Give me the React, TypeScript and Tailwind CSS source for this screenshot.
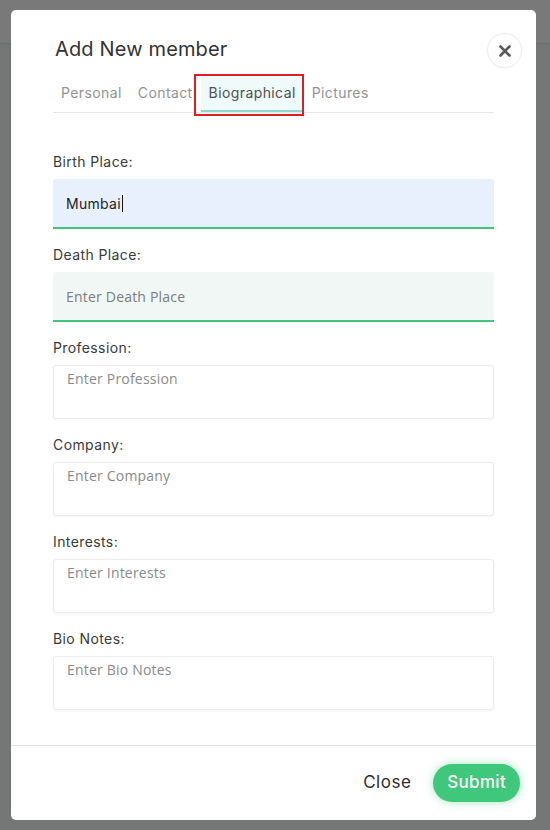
import React from 'react';

const poppins = { fontFamily: 'Inter, "Noto Sans", sans-serif' };
const openSans = { fontFamily: '"Open Sans", "Noto Sans", sans-serif' };

const tabs = ['Personal', 'Contact', 'Biographical', 'Pictures'];

const TextField: React.FC<{ label: string; placeholder: string }> = ({ label, placeholder }) => (
  <div className="mb-[16px]">
    <label className="block text-[14px] leading-[20px] tracking-[0.4px] text-[#3a3a3a] mb-[7px]" style={poppins}>
      {label}
    </label>
    <textarea
      rows={2}
      placeholder={placeholder}
      className="block w-full h-[54px] resize-none rounded-[3px] border border-[#ececec] bg-white pl-[13px] pr-3 pt-[3px] text-[14px] leading-[20px] tracking-[0.2px] text-[#333] placeholder:text-[#8a8a8a] shadow-[0_1px_3px_rgba(0,0,0,0.05)] outline-none"
      style={openSans}
    />
  </div>
);

export default function App() {
  return (
    <div className="w-[550px] h-[830px] overflow-hidden bg-[linear-gradient(to_bottom,#797979_0,#797979_43px,#6c6e6d_43px,#6c6e6d_44px,#747776_44px)] pt-[10px] pl-[11px]">
      <div className="w-[525px] h-[810px] bg-white rounded-[5px] flex flex-col">
        {/* header */}
        <div className="flex items-center justify-between pt-[23px] pl-[44px] pr-[14px]">
          <h2 className="text-[20px] leading-[28px] tracking-[0.15px] text-[#333] -mt-[3px]" style={poppins}>
            Add New member
          </h2>
          <button className="w-[35px] h-[35px] rounded-full border border-[#ededed] shadow-[0_0_3px_rgba(0,0,0,0.04)] flex items-center justify-center">
            <svg width="12" height="12" viewBox="0 0 12 12" fill="none">
              <path d="M1.5 1.5L10.5 10.5M10.5 1.5L1.5 10.5" stroke="#595959" strokeWidth="2.6" strokeLinecap="round" />
            </svg>
          </button>
        </div>

        <div className="px-[42px] mt-[6px]">
          <ul className="flex border-b border-[#e6e6e6]">
            {tabs.map((t) => {
              const active = t === 'Biographical';
              return (
                <li key={t} className="relative">
                  <span
                    className={`block px-2 pt-[9px] pb-[7px] text-[14px] leading-[20px] tracking-[0.4px] border-b-2 ${
                      active ? 'bg-[#effafa] border-[#8fd8d0] text-[#505050]' : 'border-transparent text-[#939393]'
                    }`}
                    style={poppins}
                  >
                    {t}
                  </span>
                  {active && (
                    <span className="absolute -left-[7px] right-0 top-0 -bottom-[4px] border-2 border-[#dc1f26]" />
                  )}
                </li>
              );
            })}
          </ul>
        </div>

        {/* body */}
        <div className="flex-1 px-[42px] pt-[39px]">
          <div className="mb-[16px]">
            <label className="block text-[14px] leading-[20px] tracking-[0.4px] text-[#3a3a3a] mb-[7px]" style={poppins}>
              Birth Place:
            </label>
            <div className="h-[50px] rounded-t-[3px] bg-[#e8f0fe] border-b-2 border-[#42c47d] pl-[13px] flex items-center">
              <span className="text-[14px] tracking-[0.3px] text-[#222]" style={poppins}>
                Mumbai
              </span>
              <span className="w-px h-[17px] bg-[#111] ml-[1px]" />
            </div>
          </div>

          <div className="mb-[16px]">
            <label className="block text-[14px] leading-[20px] tracking-[0.4px] text-[#3a3a3a] mb-[7px]" style={poppins}>
              Death Place:
            </label>
            <input
              placeholder="Enter Death Place"
              className="block w-full h-[50px] rounded-t-[3px] bg-[#f1f7f5] border-b-2 border-[#42c47d] pl-[13px] text-[14px] tracking-[0.2px] text-[#333] placeholder:text-[#7c7c7c] outline-none"
              style={openSans}
            />
          </div>

          <TextField label="Profession:" placeholder="Enter Profession" />
          <TextField label="Company:" placeholder="Enter Company" />
          <TextField label="Interests:" placeholder="Enter Interests" />
          <TextField label="Bio Notes:" placeholder="Enter Bio Notes" />
        </div>

        {/* footer */}
        <div className="h-[75px] border-t border-[#e4e4e4] flex items-center justify-end pr-[16px] gap-[22px]">
          <button className="text-[17px] tracking-[0.5px] text-[#2d2d2d]" style={poppins}>
            Close
          </button>
          <button
            className="h-[38px] px-[14px] rounded-full bg-[#3fc77b] text-white text-[17px] tracking-[0.3px] font-medium shadow-[0_0_10px_rgba(63,199,123,0.45)]"
            style={poppins}
          >
            Submit
          </button>
        </div>
      </div>
    </div>
  );
}
